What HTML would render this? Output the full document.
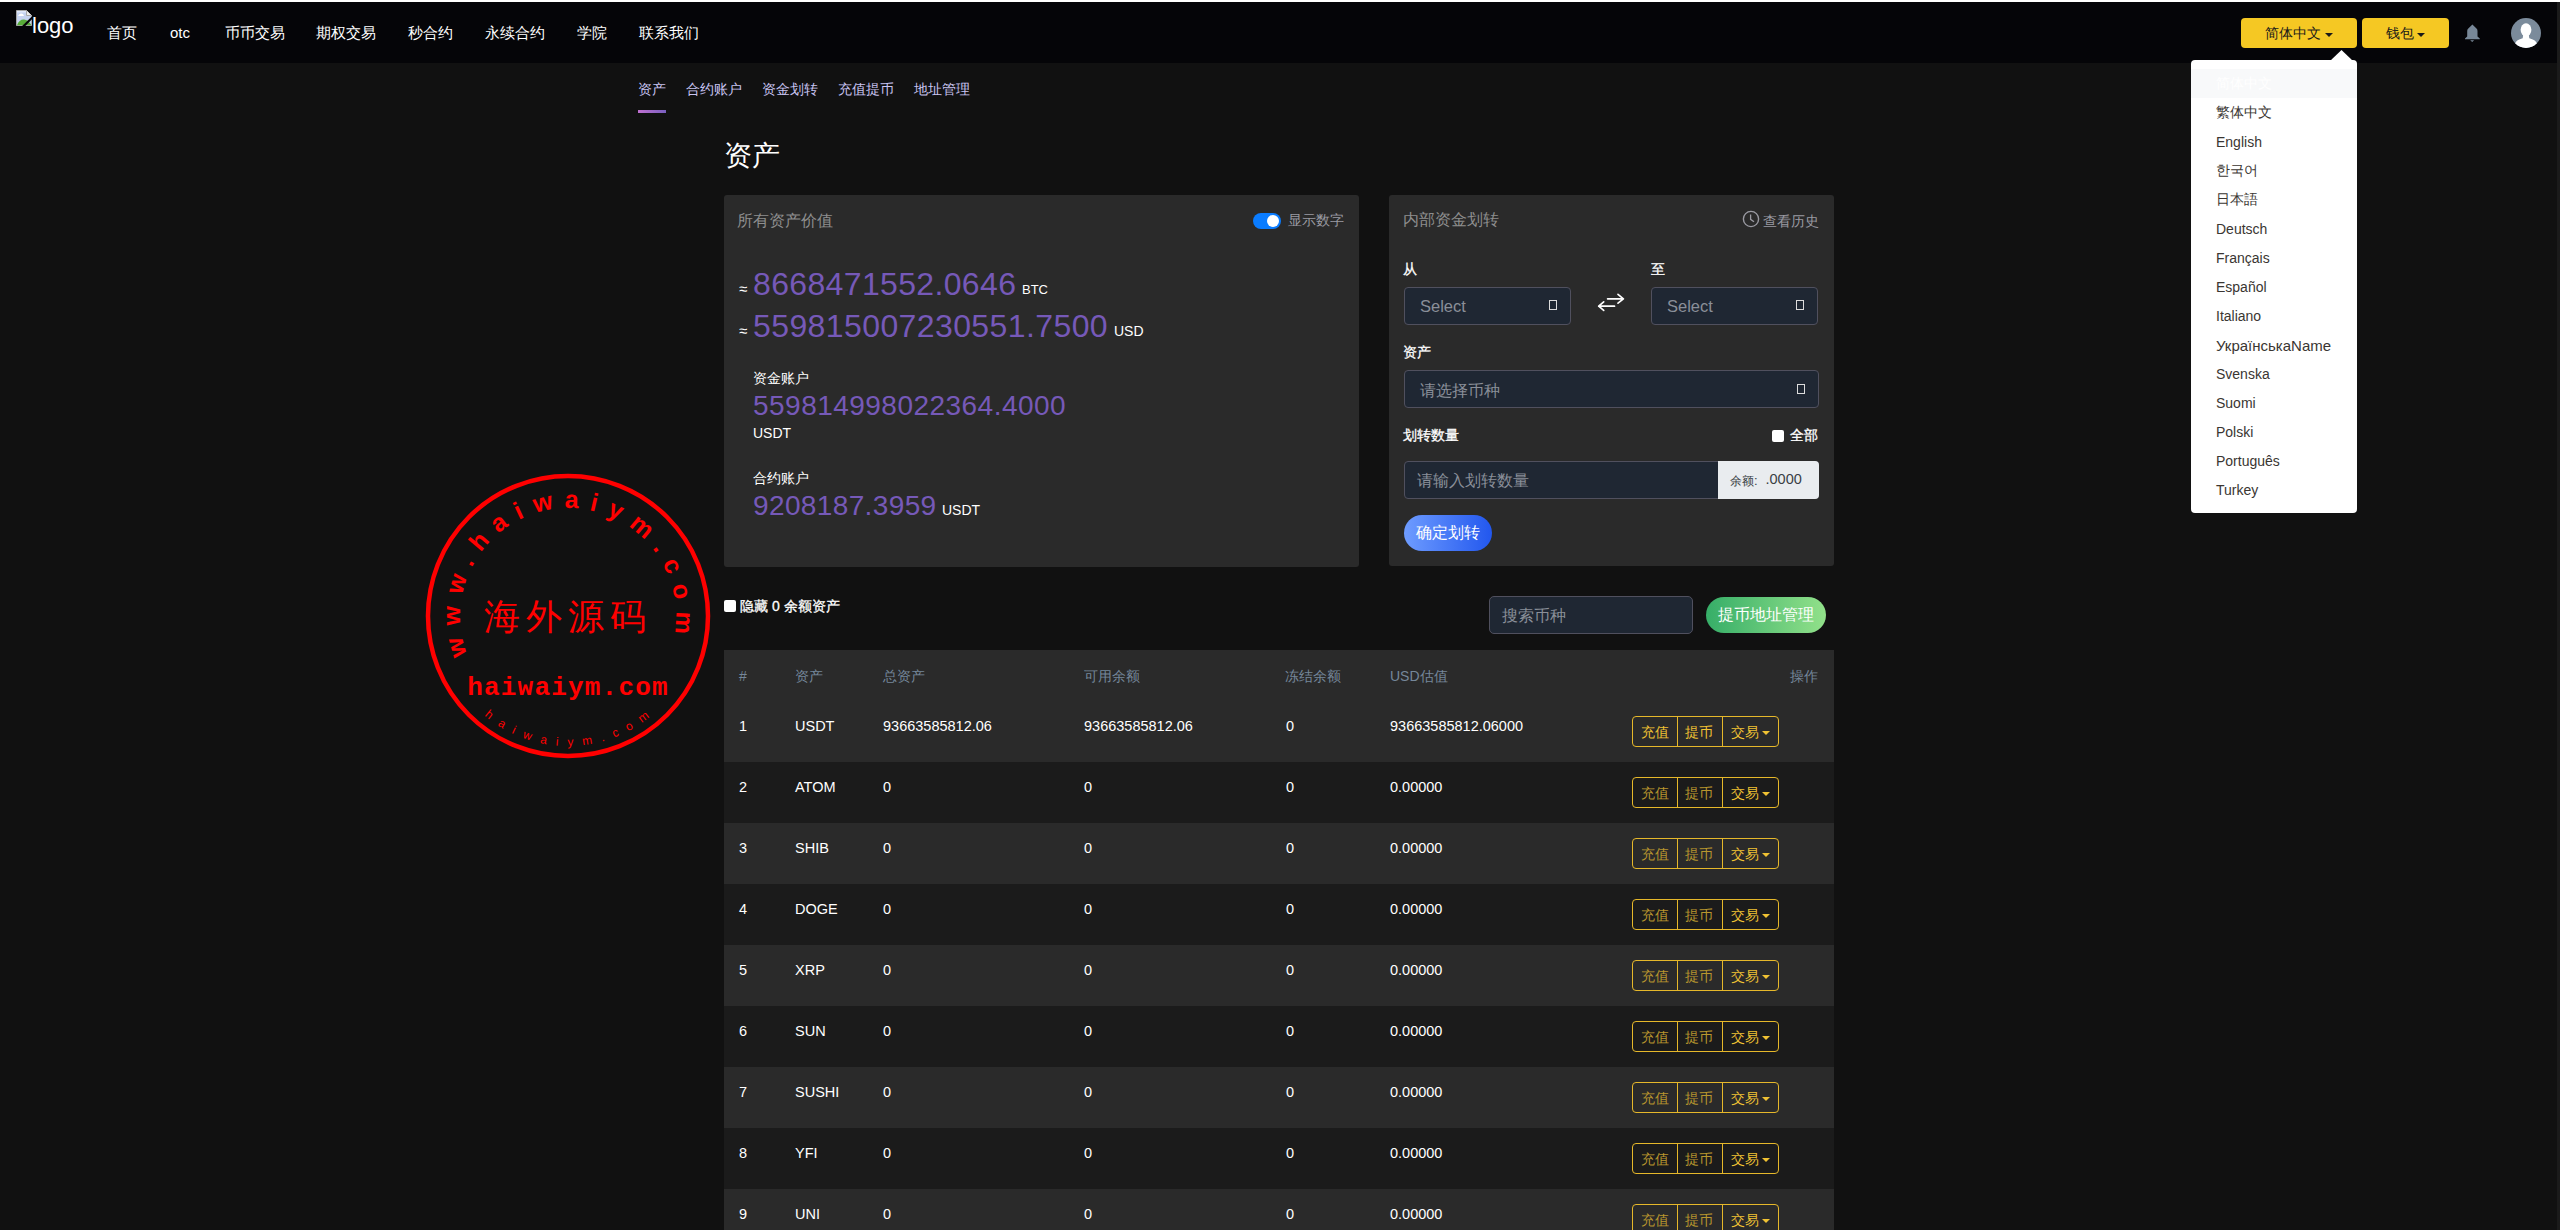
<!DOCTYPE html>
<html><head><meta charset="utf-8"><style>
*{box-sizing:border-box;margin:0;padding:0}
html,body{width:2560px;height:1230px;overflow:hidden;background:#111111;font-family:"Liberation Sans",sans-serif;color:#fff}
.a{position:absolute;white-space:nowrap}
.card{background:#2a2a2a;border-radius:3px}
.inp{background:#1f2733;border:1px solid #4f4f5f;border-radius:4px}
.tofu{width:9px;height:11px;border:1.6px solid #d8d8d8}
</style></head><body>
<div class="a" style="left:0px;top:0px;width:2560px;height:2px;background:#fff"></div>
<div class="a" style="left:0px;top:2px;width:2557px;height:61px;background:#050508"></div>
<div class="a" style="left:2557px;top:2px;width:3px;height:1228px;background:#1b1b1b"></div>
<svg class="a" style="left:16px;top:10px" width="17" height="17" viewBox="0 0 17 17">
<path d="M0.5 0.5H10.5L15.5 5.5V15.5H0.5Z" fill="#c6d3f0" stroke="#a8a8a8"/>
<rect x="1" y="1.2" width="9" height="1.2" fill="#e6eeff"/>
<path d="M2 6Q3.5 3 5.5 3.6Q7.2 3.8 7.8 5.2V6Z" fill="#fff"/>
<path d="M1 15.2Q3 9.5 8 9.6Q12 9.8 15 14.6V15.2Z" fill="#58ad38"/>
<path d="M10.5 0.5V5.5H15.5" fill="#ececec" stroke="#a8a8a8"/>
<path d="M16.6 7.2L6.9 16.9" stroke="#050508" stroke-width="2.2"/>
</svg>
<div class="a" style="left:32px;top:15px;font-size:22px;line-height:22px;color:#fff;">logo</div>
<div class="a" style="left:107px;top:25px;font-size:15px;line-height:15px;color:#fff;">首页</div>
<div class="a" style="left:170px;top:25px;font-size:15px;line-height:15px;color:#fff;">otc</div>
<div class="a" style="left:225px;top:25px;font-size:15px;line-height:15px;color:#fff;">币币交易</div>
<div class="a" style="left:316px;top:25px;font-size:15px;line-height:15px;color:#fff;">期权交易</div>
<div class="a" style="left:408px;top:25px;font-size:15px;line-height:15px;color:#fff;">秒合约</div>
<div class="a" style="left:485px;top:25px;font-size:15px;line-height:15px;color:#fff;">永续合约</div>
<div class="a" style="left:577px;top:25px;font-size:15px;line-height:15px;color:#fff;">学院</div>
<div class="a" style="left:639px;top:25px;font-size:15px;line-height:15px;color:#fff;">联系我们</div>
<div class="a" style="left:2241px;top:18px;width:116px;height:30px;background:#f5c823;border-radius:4px"></div>
<div class="a" style="left:2265px;top:26px;font-size:14px;line-height:14px;color:#1a1a1a;">简体中文</div>
<div class="a" style="left:2325px;top:33px;width:0;height:0;border-left:4px solid transparent;border-right:4px solid transparent;border-top:4px solid #1a1a1a"></div>
<div class="a" style="left:2362px;top:18px;width:87px;height:30px;background:#f5c823;border-radius:4px"></div>
<div class="a" style="left:2386px;top:26px;font-size:14px;line-height:14px;color:#1a1a1a;">钱包</div>
<div class="a" style="left:2417px;top:33px;width:0;height:0;border-left:4px solid transparent;border-right:4px solid transparent;border-top:4px solid #1a1a1a"></div>
<svg class="a" style="left:2464px;top:24px" width="17" height="19" viewBox="0 0 17 19">
<path d="M8.4 0.6L4.3 4.6Q3.2 5.6 3.2 7V12.5L1 14.6V15.3H15.8V14.6L13.5 12.5V7Q13.5 5.6 12.5 4.6Z" fill="#788898"/>
<path d="M6.2 16.3H10.2L8.2 18.1Z" fill="#788898"/>
</svg>
<svg class="a" style="left:2511px;top:18px" width="30" height="30" viewBox="0 0 30 30">
<defs><clipPath id="cc"><circle cx="15" cy="15" r="15"/></clipPath></defs>
<circle cx="15" cy="15" r="15" fill="#7b8b9b"/>
<g clip-path="url(#cc)" fill="#fff">
<ellipse cx="15" cy="11.8" rx="5.4" ry="6.6"/>
<path d="M12.3 16h5.4l0.6 4.2C22.5 21.2 25 23 26 25.5V32H4V25.5C5 23 7.5 21.2 11.7 20.2z"/>
</g></svg>
<div class="a" style="left:638px;top:82px;font-size:14px;line-height:14px;color:#c9c4f2;">资产</div>
<div class="a" style="left:686px;top:82px;font-size:14px;line-height:14px;color:#c9c4f2;">合约账户</div>
<div class="a" style="left:762px;top:82px;font-size:14px;line-height:14px;color:#c9c4f2;">资金划转</div>
<div class="a" style="left:838px;top:82px;font-size:14px;line-height:14px;color:#c9c4f2;">充值提币</div>
<div class="a" style="left:914px;top:82px;font-size:14px;line-height:14px;color:#c9c4f2;">地址管理</div>
<div class="a" style="left:638px;top:110px;width:28px;height:3px;background:linear-gradient(90deg,#c070d0,#7a60c0)"></div>
<div class="a" style="left:724px;top:141.5px;font-size:28px;line-height:28px;color:#fff;">资产</div>
<div class="a" style="left:724px;top:195px;width:635px;height:372px;background:#2a2a2a;border-radius:3px"></div>
<div class="a" style="left:737px;top:213px;font-size:16px;line-height:16px;color:#8e8e8e;">所有资产价值</div>
<div class="a" style="left:1253px;top:213px;width:28px;height:16px;background:#0a7cff;border-radius:8px"></div>
<div class="a" style="left:1267px;top:215px;width:12px;height:12px;background:#fff;border-radius:6px"></div>
<div class="a" style="left:1288px;top:213px;font-size:14px;line-height:14px;color:#9a9aa2;">显示数字</div>
<div class="a" style="left:739px;top:281px;font-size:15px;line-height:15px;color:#fff;">≈</div>
<div class="a" style="left:753px;top:268px;font-size:32px;line-height:32px;color:#7659b8;letter-spacing:0.35px">8668471552.0646</div>
<div class="a" style="left:1022px;top:282.5px;font-size:13px;line-height:13px;color:#fff;">BTC</div>
<div class="a" style="left:739px;top:323px;font-size:15px;line-height:15px;color:#fff;">≈</div>
<div class="a" style="left:753px;top:310px;font-size:32px;line-height:32px;color:#7659b8;letter-spacing:0.4px">559815007230551.7500</div>
<div class="a" style="left:1114px;top:323.5px;font-size:14px;line-height:14px;color:#fff;">USD</div>
<div class="a" style="left:753px;top:371px;font-size:14px;line-height:14px;color:#fff;">资金账户</div>
<div class="a" style="left:753px;top:392px;font-size:28px;line-height:28px;color:#7659b8;letter-spacing:0.47px">559814998022364.4000</div>
<div class="a" style="left:753px;top:426px;font-size:14px;line-height:14px;color:#fff;">USDT</div>
<div class="a" style="left:753px;top:471px;font-size:14px;line-height:14px;color:#fff;">合约账户</div>
<div class="a" style="left:753px;top:492px;font-size:28px;line-height:28px;color:#7659b8;letter-spacing:0.37px">9208187.3959</div>
<div class="a" style="left:942px;top:503px;font-size:14px;line-height:14px;color:#fff;">USDT</div>
<div class="a" style="left:1389px;top:195px;width:445px;height:371px;background:#2a2a2a;border-radius:3px"></div>
<div class="a" style="left:1403px;top:212px;font-size:16px;line-height:16px;color:#8e8e8e;">内部资金划转</div>
<svg class="a" style="left:1742px;top:210px" width="18" height="18" viewBox="0 0 18 18">
<circle cx="9" cy="9" r="7.6" fill="none" stroke="#9a9aa2" stroke-width="1.4"/>
<path d="M8.6 4.5V9.3L12 11.8" fill="none" stroke="#9a9aa2" stroke-width="1.3"/>
</svg>
<div class="a" style="left:1763px;top:214px;font-size:14px;line-height:14px;color:#9a9aa2;">查看历史</div>
<div class="a" style="left:1403px;top:262px;font-size:14px;line-height:14px;color:#fff;-webkit-text-stroke:0.3px #fff">从</div>
<div class="a" style="left:1651px;top:262px;font-size:14px;line-height:14px;color:#fff;-webkit-text-stroke:0.3px #fff">至</div>
<div class="a" style="left:1404px;top:287px;width:167px;height:38px;background:#1f2733;border:1px solid #50505e;border-radius:4px"></div>
<div class="a" style="left:1420px;top:298px;font-size:16.5px;line-height:16.5px;color:#8a8f99;">Select</div>
<div class="a" style="left:1549px;top:300px;width:8px;height:10px;border:1.5px solid #dcdcdc"></div>
<div class="a" style="left:1651px;top:287px;width:167px;height:38px;background:#1f2733;border:1px solid #50505e;border-radius:4px"></div>
<div class="a" style="left:1667px;top:298px;font-size:16.5px;line-height:16.5px;color:#8a8f99;">Select</div>
<div class="a" style="left:1796px;top:300px;width:8px;height:10px;border:1.5px solid #dcdcdc"></div>
<svg class="a" style="left:1597px;top:292px" width="29" height="21" viewBox="0 0 29 21">
<path d="M10.6 6.8H26.4M21 2.4L26.4 6.8L21 11.1" fill="none" stroke="#fff" stroke-width="1.7" stroke-linecap="round" stroke-linejoin="round"/>
<path d="M17.5 14.2H1.7M6.7 9.8L1.7 14.2L6.7 18.4" fill="none" stroke="#fff" stroke-width="1.7" stroke-linecap="round" stroke-linejoin="round"/>
</svg>
<div class="a" style="left:1403px;top:345px;font-size:14px;line-height:14px;color:#fff;-webkit-text-stroke:0.3px #fff">资产</div>
<div class="a" style="left:1404px;top:370px;width:415px;height:38px;background:#1f2733;border:1px solid #50505e;border-radius:4px"></div>
<div class="a" style="left:1420px;top:383px;font-size:16px;line-height:16px;color:#8a8f99;">请选择币种</div>
<div class="a" style="left:1797px;top:384px;width:8px;height:10px;border:1.5px solid #dcdcdc"></div>
<div class="a" style="left:1403px;top:428px;font-size:14px;line-height:14px;color:#fff;-webkit-text-stroke:0.3px #fff">划转数量</div>
<div class="a" style="left:1771.5px;top:429.5px;width:12px;height:12px;background:#fff;border-radius:2px"></div>
<div class="a" style="left:1790px;top:428px;font-size:14px;line-height:14px;color:#fff;-webkit-text-stroke:0.3px #fff">全部</div>
<div class="a" style="left:1404px;top:461px;width:415px;height:38px;background:#1f2733;border:1px solid #50505e;border-radius:4px"></div>
<div class="a" style="left:1718px;top:461px;width:101px;height:38px;background:#e9ecef;border-radius:0 4px 4px 0"></div>
<div class="a" style="left:1417px;top:473px;font-size:16px;line-height:16px;color:#8a8f99;">请输入划转数量</div>
<div class="a" style="left:1730px;top:475px;font-size:12px;line-height:12px;color:#3a3f45;">余额</div>
<div class="a" style="left:1754px;top:474px;font-size:13px;line-height:13px;color:#3a3f45;">:</div>
<div class="a" style="left:1765.5px;top:472px;font-size:14.5px;line-height:14.5px;color:#3a3f45;">.0000</div>
<div class="a" style="left:1404px;top:515px;width:88px;height:36px;background:linear-gradient(90deg,#6e9cff,#2257ee);border-radius:18px"></div>
<div class="a" style="left:1416px;top:525px;font-size:16px;line-height:16px;color:#fff;">确定划转</div>
<div class="a" style="left:724px;top:600px;width:12px;height:12px;background:#fff;border-radius:2px"></div>
<div class="a" style="left:740px;top:599px;font-size:14px;line-height:14px;color:#fff;-webkit-text-stroke:0.3px #fff">隐藏 0 余额资产</div>
<div class="a" style="left:1489px;top:596px;width:204px;height:38px;background:#1f2733;border:1px solid #50505e;border-radius:5px"></div>
<div class="a" style="left:1502px;top:608px;font-size:16px;line-height:16px;color:#8a8f99;">搜索币种</div>
<div class="a" style="left:1706px;top:597px;width:120px;height:36px;background:linear-gradient(90deg,#36ae68,#92e18a);border-radius:18px"></div>
<div class="a" style="left:1718px;top:607px;font-size:16px;line-height:16px;color:#fff;">提币地址管理</div>
<div class="a" style="left:724px;top:650px;width:1110px;height:51px;background:#2a2a2a"></div>
<div class="a" style="left:739px;top:669px;font-size:14px;line-height:14px;color:#75879a;">#</div>
<div class="a" style="left:795px;top:669px;font-size:14px;line-height:14px;color:#75879a;">资产</div>
<div class="a" style="left:883px;top:669px;font-size:14px;line-height:14px;color:#75879a;">总资产</div>
<div class="a" style="left:1084px;top:669px;font-size:14px;line-height:14px;color:#75879a;">可用余额</div>
<div class="a" style="left:1285px;top:669px;font-size:14px;line-height:14px;color:#75879a;">冻结余额</div>
<div class="a" style="left:1390px;top:669px;font-size:14px;line-height:14px;color:#75879a;">USD估值</div>
<div class="a" style="left:1790px;top:669px;font-size:14px;line-height:14px;color:#75879a;">操作</div>
<div class="a" style="left:724px;top:701px;width:1110px;height:61px;background:#2a2a2a"></div>
<div class="a" style="left:739px;top:719px;font-size:14.5px;line-height:14.5px;color:#fff;">1</div>
<div class="a" style="left:795px;top:719px;font-size:14.5px;line-height:14.5px;color:#fff;">USDT</div>
<div class="a" style="left:883px;top:719px;font-size:14.5px;line-height:14.5px;color:#fff;">93663585812.06</div>
<div class="a" style="left:1084px;top:719px;font-size:14.5px;line-height:14.5px;color:#fff;">93663585812.06</div>
<div class="a" style="left:1286px;top:719px;font-size:14.5px;line-height:14.5px;color:#fff;">0</div>
<div class="a" style="left:1390px;top:719px;font-size:14.5px;line-height:14.5px;color:#fff;">93663585812.06000</div>
<div class="a" style="left:1632px;top:716px;width:147px;height:31px;border:1px solid #e6b82a;border-radius:4px"></div>
<div class="a" style="left:1677px;top:716px;width:1px;height:31px;background:#e6b82a"></div>
<div class="a" style="left:1722px;top:716px;width:1px;height:31px;background:#e6b82a"></div>
<div class="a" style="left:1641px;top:725px;font-size:14px;line-height:14px;color:#f0c233;">充值</div>
<div class="a" style="left:1685px;top:725px;font-size:14px;line-height:14px;color:#f0c233;">提币</div>
<div class="a" style="left:1731px;top:725px;font-size:14px;line-height:14px;color:#f0c233;">交易</div>
<div class="a" style="left:1762px;top:731px;width:0;height:0;border-left:4px solid transparent;border-right:4px solid transparent;border-top:4px solid #f0c233"></div>
<div class="a" style="left:724px;top:762px;width:1110px;height:61px;background:#1b1b1b"></div>
<div class="a" style="left:739px;top:780px;font-size:14.5px;line-height:14.5px;color:#fff;">2</div>
<div class="a" style="left:795px;top:780px;font-size:14.5px;line-height:14.5px;color:#fff;">ATOM</div>
<div class="a" style="left:883px;top:780px;font-size:14.5px;line-height:14.5px;color:#fff;">0</div>
<div class="a" style="left:1084px;top:780px;font-size:14.5px;line-height:14.5px;color:#fff;">0</div>
<div class="a" style="left:1286px;top:780px;font-size:14.5px;line-height:14.5px;color:#fff;">0</div>
<div class="a" style="left:1390px;top:780px;font-size:14.5px;line-height:14.5px;color:#fff;">0.00000</div>
<div class="a" style="left:1632px;top:777px;width:147px;height:31px;border:1px solid #e6b82a;border-radius:4px"></div>
<div class="a" style="left:1677px;top:777px;width:1px;height:31px;background:#e6b82a"></div>
<div class="a" style="left:1722px;top:777px;width:1px;height:31px;background:#e6b82a"></div>
<div class="a" style="left:1641px;top:786px;font-size:14px;line-height:14px;color:#b8962e;">充值</div>
<div class="a" style="left:1685px;top:786px;font-size:14px;line-height:14px;color:#b8962e;">提币</div>
<div class="a" style="left:1731px;top:786px;font-size:14px;line-height:14px;color:#f0c233;">交易</div>
<div class="a" style="left:1762px;top:792px;width:0;height:0;border-left:4px solid transparent;border-right:4px solid transparent;border-top:4px solid #f0c233"></div>
<div class="a" style="left:724px;top:823px;width:1110px;height:61px;background:#2a2a2a"></div>
<div class="a" style="left:739px;top:841px;font-size:14.5px;line-height:14.5px;color:#fff;">3</div>
<div class="a" style="left:795px;top:841px;font-size:14.5px;line-height:14.5px;color:#fff;">SHIB</div>
<div class="a" style="left:883px;top:841px;font-size:14.5px;line-height:14.5px;color:#fff;">0</div>
<div class="a" style="left:1084px;top:841px;font-size:14.5px;line-height:14.5px;color:#fff;">0</div>
<div class="a" style="left:1286px;top:841px;font-size:14.5px;line-height:14.5px;color:#fff;">0</div>
<div class="a" style="left:1390px;top:841px;font-size:14.5px;line-height:14.5px;color:#fff;">0.00000</div>
<div class="a" style="left:1632px;top:838px;width:147px;height:31px;border:1px solid #e6b82a;border-radius:4px"></div>
<div class="a" style="left:1677px;top:838px;width:1px;height:31px;background:#e6b82a"></div>
<div class="a" style="left:1722px;top:838px;width:1px;height:31px;background:#e6b82a"></div>
<div class="a" style="left:1641px;top:847px;font-size:14px;line-height:14px;color:#b8962e;">充值</div>
<div class="a" style="left:1685px;top:847px;font-size:14px;line-height:14px;color:#b8962e;">提币</div>
<div class="a" style="left:1731px;top:847px;font-size:14px;line-height:14px;color:#f0c233;">交易</div>
<div class="a" style="left:1762px;top:853px;width:0;height:0;border-left:4px solid transparent;border-right:4px solid transparent;border-top:4px solid #f0c233"></div>
<div class="a" style="left:724px;top:884px;width:1110px;height:61px;background:#1b1b1b"></div>
<div class="a" style="left:739px;top:902px;font-size:14.5px;line-height:14.5px;color:#fff;">4</div>
<div class="a" style="left:795px;top:902px;font-size:14.5px;line-height:14.5px;color:#fff;">DOGE</div>
<div class="a" style="left:883px;top:902px;font-size:14.5px;line-height:14.5px;color:#fff;">0</div>
<div class="a" style="left:1084px;top:902px;font-size:14.5px;line-height:14.5px;color:#fff;">0</div>
<div class="a" style="left:1286px;top:902px;font-size:14.5px;line-height:14.5px;color:#fff;">0</div>
<div class="a" style="left:1390px;top:902px;font-size:14.5px;line-height:14.5px;color:#fff;">0.00000</div>
<div class="a" style="left:1632px;top:899px;width:147px;height:31px;border:1px solid #e6b82a;border-radius:4px"></div>
<div class="a" style="left:1677px;top:899px;width:1px;height:31px;background:#e6b82a"></div>
<div class="a" style="left:1722px;top:899px;width:1px;height:31px;background:#e6b82a"></div>
<div class="a" style="left:1641px;top:908px;font-size:14px;line-height:14px;color:#b8962e;">充值</div>
<div class="a" style="left:1685px;top:908px;font-size:14px;line-height:14px;color:#b8962e;">提币</div>
<div class="a" style="left:1731px;top:908px;font-size:14px;line-height:14px;color:#f0c233;">交易</div>
<div class="a" style="left:1762px;top:914px;width:0;height:0;border-left:4px solid transparent;border-right:4px solid transparent;border-top:4px solid #f0c233"></div>
<div class="a" style="left:724px;top:945px;width:1110px;height:61px;background:#2a2a2a"></div>
<div class="a" style="left:739px;top:963px;font-size:14.5px;line-height:14.5px;color:#fff;">5</div>
<div class="a" style="left:795px;top:963px;font-size:14.5px;line-height:14.5px;color:#fff;">XRP</div>
<div class="a" style="left:883px;top:963px;font-size:14.5px;line-height:14.5px;color:#fff;">0</div>
<div class="a" style="left:1084px;top:963px;font-size:14.5px;line-height:14.5px;color:#fff;">0</div>
<div class="a" style="left:1286px;top:963px;font-size:14.5px;line-height:14.5px;color:#fff;">0</div>
<div class="a" style="left:1390px;top:963px;font-size:14.5px;line-height:14.5px;color:#fff;">0.00000</div>
<div class="a" style="left:1632px;top:960px;width:147px;height:31px;border:1px solid #e6b82a;border-radius:4px"></div>
<div class="a" style="left:1677px;top:960px;width:1px;height:31px;background:#e6b82a"></div>
<div class="a" style="left:1722px;top:960px;width:1px;height:31px;background:#e6b82a"></div>
<div class="a" style="left:1641px;top:969px;font-size:14px;line-height:14px;color:#b8962e;">充值</div>
<div class="a" style="left:1685px;top:969px;font-size:14px;line-height:14px;color:#b8962e;">提币</div>
<div class="a" style="left:1731px;top:969px;font-size:14px;line-height:14px;color:#f0c233;">交易</div>
<div class="a" style="left:1762px;top:975px;width:0;height:0;border-left:4px solid transparent;border-right:4px solid transparent;border-top:4px solid #f0c233"></div>
<div class="a" style="left:724px;top:1006px;width:1110px;height:61px;background:#1b1b1b"></div>
<div class="a" style="left:739px;top:1024px;font-size:14.5px;line-height:14.5px;color:#fff;">6</div>
<div class="a" style="left:795px;top:1024px;font-size:14.5px;line-height:14.5px;color:#fff;">SUN</div>
<div class="a" style="left:883px;top:1024px;font-size:14.5px;line-height:14.5px;color:#fff;">0</div>
<div class="a" style="left:1084px;top:1024px;font-size:14.5px;line-height:14.5px;color:#fff;">0</div>
<div class="a" style="left:1286px;top:1024px;font-size:14.5px;line-height:14.5px;color:#fff;">0</div>
<div class="a" style="left:1390px;top:1024px;font-size:14.5px;line-height:14.5px;color:#fff;">0.00000</div>
<div class="a" style="left:1632px;top:1021px;width:147px;height:31px;border:1px solid #e6b82a;border-radius:4px"></div>
<div class="a" style="left:1677px;top:1021px;width:1px;height:31px;background:#e6b82a"></div>
<div class="a" style="left:1722px;top:1021px;width:1px;height:31px;background:#e6b82a"></div>
<div class="a" style="left:1641px;top:1030px;font-size:14px;line-height:14px;color:#b8962e;">充值</div>
<div class="a" style="left:1685px;top:1030px;font-size:14px;line-height:14px;color:#b8962e;">提币</div>
<div class="a" style="left:1731px;top:1030px;font-size:14px;line-height:14px;color:#f0c233;">交易</div>
<div class="a" style="left:1762px;top:1036px;width:0;height:0;border-left:4px solid transparent;border-right:4px solid transparent;border-top:4px solid #f0c233"></div>
<div class="a" style="left:724px;top:1067px;width:1110px;height:61px;background:#2a2a2a"></div>
<div class="a" style="left:739px;top:1085px;font-size:14.5px;line-height:14.5px;color:#fff;">7</div>
<div class="a" style="left:795px;top:1085px;font-size:14.5px;line-height:14.5px;color:#fff;">SUSHI</div>
<div class="a" style="left:883px;top:1085px;font-size:14.5px;line-height:14.5px;color:#fff;">0</div>
<div class="a" style="left:1084px;top:1085px;font-size:14.5px;line-height:14.5px;color:#fff;">0</div>
<div class="a" style="left:1286px;top:1085px;font-size:14.5px;line-height:14.5px;color:#fff;">0</div>
<div class="a" style="left:1390px;top:1085px;font-size:14.5px;line-height:14.5px;color:#fff;">0.00000</div>
<div class="a" style="left:1632px;top:1082px;width:147px;height:31px;border:1px solid #e6b82a;border-radius:4px"></div>
<div class="a" style="left:1677px;top:1082px;width:1px;height:31px;background:#e6b82a"></div>
<div class="a" style="left:1722px;top:1082px;width:1px;height:31px;background:#e6b82a"></div>
<div class="a" style="left:1641px;top:1091px;font-size:14px;line-height:14px;color:#b8962e;">充值</div>
<div class="a" style="left:1685px;top:1091px;font-size:14px;line-height:14px;color:#b8962e;">提币</div>
<div class="a" style="left:1731px;top:1091px;font-size:14px;line-height:14px;color:#f0c233;">交易</div>
<div class="a" style="left:1762px;top:1097px;width:0;height:0;border-left:4px solid transparent;border-right:4px solid transparent;border-top:4px solid #f0c233"></div>
<div class="a" style="left:724px;top:1128px;width:1110px;height:61px;background:#1b1b1b"></div>
<div class="a" style="left:739px;top:1146px;font-size:14.5px;line-height:14.5px;color:#fff;">8</div>
<div class="a" style="left:795px;top:1146px;font-size:14.5px;line-height:14.5px;color:#fff;">YFI</div>
<div class="a" style="left:883px;top:1146px;font-size:14.5px;line-height:14.5px;color:#fff;">0</div>
<div class="a" style="left:1084px;top:1146px;font-size:14.5px;line-height:14.5px;color:#fff;">0</div>
<div class="a" style="left:1286px;top:1146px;font-size:14.5px;line-height:14.5px;color:#fff;">0</div>
<div class="a" style="left:1390px;top:1146px;font-size:14.5px;line-height:14.5px;color:#fff;">0.00000</div>
<div class="a" style="left:1632px;top:1143px;width:147px;height:31px;border:1px solid #e6b82a;border-radius:4px"></div>
<div class="a" style="left:1677px;top:1143px;width:1px;height:31px;background:#e6b82a"></div>
<div class="a" style="left:1722px;top:1143px;width:1px;height:31px;background:#e6b82a"></div>
<div class="a" style="left:1641px;top:1152px;font-size:14px;line-height:14px;color:#b8962e;">充值</div>
<div class="a" style="left:1685px;top:1152px;font-size:14px;line-height:14px;color:#b8962e;">提币</div>
<div class="a" style="left:1731px;top:1152px;font-size:14px;line-height:14px;color:#f0c233;">交易</div>
<div class="a" style="left:1762px;top:1158px;width:0;height:0;border-left:4px solid transparent;border-right:4px solid transparent;border-top:4px solid #f0c233"></div>
<div class="a" style="left:724px;top:1189px;width:1110px;height:61px;background:#2a2a2a"></div>
<div class="a" style="left:739px;top:1207px;font-size:14.5px;line-height:14.5px;color:#fff;">9</div>
<div class="a" style="left:795px;top:1207px;font-size:14.5px;line-height:14.5px;color:#fff;">UNI</div>
<div class="a" style="left:883px;top:1207px;font-size:14.5px;line-height:14.5px;color:#fff;">0</div>
<div class="a" style="left:1084px;top:1207px;font-size:14.5px;line-height:14.5px;color:#fff;">0</div>
<div class="a" style="left:1286px;top:1207px;font-size:14.5px;line-height:14.5px;color:#fff;">0</div>
<div class="a" style="left:1390px;top:1207px;font-size:14.5px;line-height:14.5px;color:#fff;">0.00000</div>
<div class="a" style="left:1632px;top:1204px;width:147px;height:31px;border:1px solid #e6b82a;border-radius:4px"></div>
<div class="a" style="left:1677px;top:1204px;width:1px;height:31px;background:#e6b82a"></div>
<div class="a" style="left:1722px;top:1204px;width:1px;height:31px;background:#e6b82a"></div>
<div class="a" style="left:1641px;top:1213px;font-size:14px;line-height:14px;color:#b8962e;">充值</div>
<div class="a" style="left:1685px;top:1213px;font-size:14px;line-height:14px;color:#b8962e;">提币</div>
<div class="a" style="left:1731px;top:1213px;font-size:14px;line-height:14px;color:#f0c233;">交易</div>
<div class="a" style="left:1762px;top:1219px;width:0;height:0;border-left:4px solid transparent;border-right:4px solid transparent;border-top:4px solid #f0c233"></div>
<svg class="a" style="left:423px;top:471px" width="290" height="290" viewBox="0 0 290 290">
<circle cx="145" cy="145" r="140" fill="none" stroke="#ff0000" stroke-width="4.5"/>
<defs>
<path id="arcTop" d="M 44.2 183.7 A 108 108 0 1 1 251.4 163.8"/>
<path id="arcBot" d="M 61.4 244.6 A 130 130 0 0 0 226.8 246"/>
</defs>
<text font-family="Liberation Sans" font-weight="bold" font-size="25" fill="#ff0000"><textPath href="#arcTop" textLength="396" lengthAdjust="spacing">www.haiwaiym.com</textPath></text>
<text x="145" y="158" text-anchor="middle" font-size="36" fill="#ff0000" font-family="Liberation Serif" letter-spacing="6">海外源码</text>
<text x="145" y="224" text-anchor="middle" font-family="Liberation Mono" font-weight="bold" font-size="26" fill="#ff0000" letter-spacing="1.2">haiwaiym.com</text>
<text font-family="Liberation Sans" font-size="12" fill="#ff0000"><textPath href="#arcBot" textLength="179" lengthAdjust="spacing">haiwaiym.com</textPath></text>
</svg>
<svg class="a" style="left:2330px;top:50px" width="23" height="12" viewBox="0 0 23 12"><path d="M0 11L11.5 0L23 11Z" fill="#fff"/></svg>
<div class="a" style="left:2191px;top:60px;width:166px;height:453px;background:#fff;border-radius:4px"></div>
<div class="a" style="left:2191px;top:69px;width:166px;height:29px;background:#f8f9fa"></div>
<div class="a" style="left:2216px;top:76px;font-size:14px;line-height:14px;color:#ffffff;">简体中文</div>
<div class="a" style="left:2216px;top:105px;font-size:14px;line-height:14px;color:#3a3632;">繁体中文</div>
<div class="a" style="left:2216px;top:135px;font-size:14px;line-height:14px;color:#3a3632;">English</div>
<div class="a" style="left:2216px;top:163px;font-size:14px;line-height:14px;color:#3a3632;">한국어</div>
<div class="a" style="left:2216px;top:192px;font-size:14px;line-height:14px;color:#3a3632;">日本語</div>
<div class="a" style="left:2216px;top:222px;font-size:14px;line-height:14px;color:#3a3632;">Deutsch</div>
<div class="a" style="left:2216px;top:251px;font-size:14px;line-height:14px;color:#3a3632;">Français</div>
<div class="a" style="left:2216px;top:280px;font-size:14px;line-height:14px;color:#3a3632;">Español</div>
<div class="a" style="left:2216px;top:309px;font-size:14px;line-height:14px;color:#3a3632;">Italiano</div>
<div class="a" style="left:2216px;top:338px;font-size:15px;line-height:15px;color:#3a3632;">УкраїнськаName</div>
<div class="a" style="left:2216px;top:367px;font-size:14px;line-height:14px;color:#3a3632;">Svenska</div>
<div class="a" style="left:2216px;top:396px;font-size:14px;line-height:14px;color:#3a3632;">Suomi</div>
<div class="a" style="left:2216px;top:425px;font-size:14px;line-height:14px;color:#3a3632;">Polski</div>
<div class="a" style="left:2216px;top:454px;font-size:14px;line-height:14px;color:#3a3632;">Português</div>
<div class="a" style="left:2216px;top:483px;font-size:14px;line-height:14px;color:#3a3632;">Turkey</div>
</body></html>
